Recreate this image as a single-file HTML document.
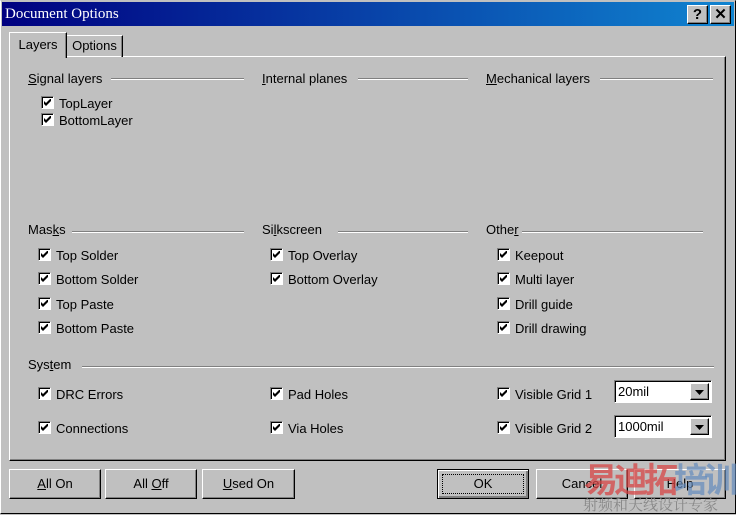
<!DOCTYPE html>
<html><head><style>
*{margin:0;padding:0;box-sizing:border-box}
body{width:736px;height:514px;background:#c0c0c0;position:relative;overflow:hidden;font-family:"Liberation Sans",Arial,sans-serif;font-size:13px;color:#000}
.a{position:absolute;white-space:nowrap}
.t{position:absolute;line-height:15px;white-space:nowrap}
.ln{position:absolute;height:2px;border-top:1px solid #808080;border-bottom:1px solid #fff}
.cb{position:absolute;width:13px;height:13px;background:#fff;border-top:1px solid #808080;border-left:1px solid #808080;border-right:1px solid #fff;border-bottom:1px solid #fff;box-shadow:inset 1px 1px 0 #000}
.cb svg{position:absolute;left:2px;top:2px}
.btn{position:absolute;height:30px;background:#c0c0c0;border-top:1px solid #fff;border-left:1px solid #fff;border-right:1px solid #000;border-bottom:1px solid #000;box-shadow:inset -1px -1px 0 #808080;text-align:center;line-height:27px}
u{text-decoration:underline}
</style></head><body>
<div class="a" style="left:0;top:0;width:736px;height:514px;border-right:1px solid #000;border-bottom:1px solid #000;border-top:1px solid #c0c0c0;border-left:1px solid #fff"></div>
<div class="a" style="left:2px;top:2px;width:732px;height:24px;background:linear-gradient(90deg,#000080,#1084d0)"></div>
<div class="a" style="left:5px;top:5px;color:#fff;font-family:'Liberation Serif',serif;font-size:15px;line-height:18px">Document Options</div>
<div class="btn" style="left:687px;top:5px;width:21px;height:19px;line-height:17px;font-weight:bold;font-size:15px">?</div>
<div class="btn" style="left:710px;top:5px;width:21px;height:19px;line-height:17px;font-weight:bold;font-size:15px">✕</div>
<!-- panel -->
<div class="a" style="left:9px;top:56px;width:717px;height:405px;border-top:1px solid #fff;border-left:1px solid #fff;border-right:1px solid #000;border-bottom:1px solid #000;box-shadow:inset -1px -1px 0 #808080"></div>
<div class="a" style="left:66px;top:35px;width:57px;height:22px;border-top:1px solid #fff;border-left:1px solid #fff;border-right:1px solid #000;box-shadow:inset -1px 0 0 #808080;text-align:center;line-height:20px">Options</div>
<div class="a" style="left:9px;top:32px;width:58px;height:26px;background:#c0c0c0;border-top:1px solid #fff;border-left:1px solid #fff;border-right:1px solid #000;box-shadow:inset -1px 0 0 #808080;text-align:center;line-height:24px">Layers</div>
<!-- groups -->
<div class="t" style="left:28px;top:71px"><u>S</u>ignal layers</div><div class="ln" style="left:111px;top:78px;width:133px"></div>
<div class="t" style="left:262px;top:71px"><u>I</u>nternal planes</div><div class="ln" style="left:358px;top:78px;width:110px"></div>
<div class="t" style="left:486px;top:71px"><u>M</u>echanical layers</div><div class="ln" style="left:600px;top:78px;width:113px"></div>
<div class="t" style="left:28px;top:222px">Mas<u>k</u>s</div><div class="ln" style="left:72px;top:231px;width:172px"></div>
<div class="t" style="left:262px;top:222px">Si<u>l</u>kscreen</div><div class="ln" style="left:338px;top:231px;width:130px"></div>
<div class="t" style="left:486px;top:222px">Othe<u>r</u></div><div class="ln" style="left:522px;top:231px;width:181px"></div>
<div class="t" style="left:28px;top:357px">Sys<u>t</u>em</div><div class="ln" style="left:82px;top:366px;width:632px"></div>
<!-- checkboxes -->
<svg width="0" height="0" style="position:absolute"><defs><symbol id="ck" viewBox="0 0 7 7"><path d="M0 2v3l2 2 5-5V-1L2 4z" fill="#000"/></symbol></defs></svg>
<div id="cbs"></div>
<script></script>
<div class="cb" style="left:41px;top:96px"><svg width="7" height="7"><use href="#ck"/></svg></div><div class="t" style="left:59px;top:96px">TopLayer</div>
<div class="cb" style="left:41px;top:113px"><svg width="7" height="7"><use href="#ck"/></svg></div><div class="t" style="left:59px;top:113px">BottomLayer</div>

<div class="cb" style="left:38px;top:248px"><svg width="7" height="7"><use href="#ck"/></svg></div><div class="t" style="left:56px;top:248px">Top Solder</div>
<div class="cb" style="left:38px;top:272px"><svg width="7" height="7"><use href="#ck"/></svg></div><div class="t" style="left:56px;top:272px">Bottom Solder</div>
<div class="cb" style="left:38px;top:297px"><svg width="7" height="7"><use href="#ck"/></svg></div><div class="t" style="left:56px;top:297px">Top Paste</div>
<div class="cb" style="left:38px;top:321px"><svg width="7" height="7"><use href="#ck"/></svg></div><div class="t" style="left:56px;top:321px">Bottom Paste</div>

<div class="cb" style="left:270px;top:248px"><svg width="7" height="7"><use href="#ck"/></svg></div><div class="t" style="left:288px;top:248px">Top Overlay</div>
<div class="cb" style="left:270px;top:272px"><svg width="7" height="7"><use href="#ck"/></svg></div><div class="t" style="left:288px;top:272px">Bottom Overlay</div>

<div class="cb" style="left:497px;top:248px"><svg width="7" height="7"><use href="#ck"/></svg></div><div class="t" style="left:515px;top:248px">Keepout</div>
<div class="cb" style="left:497px;top:272px"><svg width="7" height="7"><use href="#ck"/></svg></div><div class="t" style="left:515px;top:272px">Multi layer</div>
<div class="cb" style="left:497px;top:297px"><svg width="7" height="7"><use href="#ck"/></svg></div><div class="t" style="left:515px;top:297px">Drill guide</div>
<div class="cb" style="left:497px;top:321px"><svg width="7" height="7"><use href="#ck"/></svg></div><div class="t" style="left:515px;top:321px">Drill drawing</div>

<div class="cb" style="left:38px;top:387px"><svg width="7" height="7"><use href="#ck"/></svg></div><div class="t" style="left:56px;top:387px">DRC Errors</div>
<div class="cb" style="left:38px;top:421px"><svg width="7" height="7"><use href="#ck"/></svg></div><div class="t" style="left:56px;top:421px">Connections</div>
<div class="cb" style="left:270px;top:387px"><svg width="7" height="7"><use href="#ck"/></svg></div><div class="t" style="left:288px;top:387px">Pad Holes</div>
<div class="cb" style="left:270px;top:421px"><svg width="7" height="7"><use href="#ck"/></svg></div><div class="t" style="left:288px;top:421px">Via Holes</div>
<div class="cb" style="left:497px;top:387px"><svg width="7" height="7"><use href="#ck"/></svg></div><div class="t" style="left:515px;top:387px">Visible Grid 1</div>
<div class="cb" style="left:497px;top:421px"><svg width="7" height="7"><use href="#ck"/></svg></div><div class="t" style="left:515px;top:421px">Visible Grid 2</div>
<!-- combos -->
<div class="a" style="left:614px;top:380px;width:98px;height:23px;background:#fff;border-top:1px solid #808080;border-left:1px solid #808080;border-right:1px solid #fff;border-bottom:1px solid #fff;box-shadow:inset 1px 1px 0 #000"><span class="t" style="left:3px;top:3px">20mil</span><div class="btn" style="left:75px;top:2px;width:19px;height:17px"><svg width="9" height="5" style="position:absolute;left:4px;top:6px"><path d="M0 0h9L4.5 5z"/></svg></div></div>
<div class="a" style="left:614px;top:415px;width:98px;height:23px;background:#fff;border-top:1px solid #808080;border-left:1px solid #808080;border-right:1px solid #fff;border-bottom:1px solid #fff;box-shadow:inset 1px 1px 0 #000"><span class="t" style="left:3px;top:3px">1000mil</span><div class="btn" style="left:75px;top:2px;width:19px;height:17px"><svg width="9" height="5" style="position:absolute;left:4px;top:6px"><path d="M0 0h9L4.5 5z"/></svg></div></div>
<!-- buttons -->
<div class="btn" style="left:9px;top:469px;width:92px"><u>A</u>ll On</div>
<div class="btn" style="left:105px;top:469px;width:92px">All <u>O</u>ff</div>
<div class="btn" style="left:202px;top:469px;width:93px"><u>U</u>sed On</div>
<div class="btn" style="left:437px;top:469px;width:92px;border:1px solid #000;box-shadow:inset 1px 1px 0 #fff,inset -2px -2px 0 #808080"><div class="a" style="left:4px;top:4px;width:82px;height:20px;border:1px dotted #000"></div>OK</div>
<div class="btn" style="left:536px;top:469px;width:92px">Cancel</div>
<div class="btn" style="left:634px;top:469px;width:92px">Help</div>
<!-- watermark -->
<div class="a" style="left:584px;top:458px;font-family:'Noto Sans CJK SC',sans-serif;font-size:34px;font-weight:bold;line-height:40px;letter-spacing:-4px"><span style="color:rgba(215,70,70,.75)">易迪拓</span><span style="color:rgba(100,140,190,.7)">培训</span></div>
<div class="a" style="left:583px;top:496px;font-family:'Noto Serif CJK SC',serif;font-size:15px;line-height:17px;color:#888">射频和天线设计专家</div>
</body></html>
